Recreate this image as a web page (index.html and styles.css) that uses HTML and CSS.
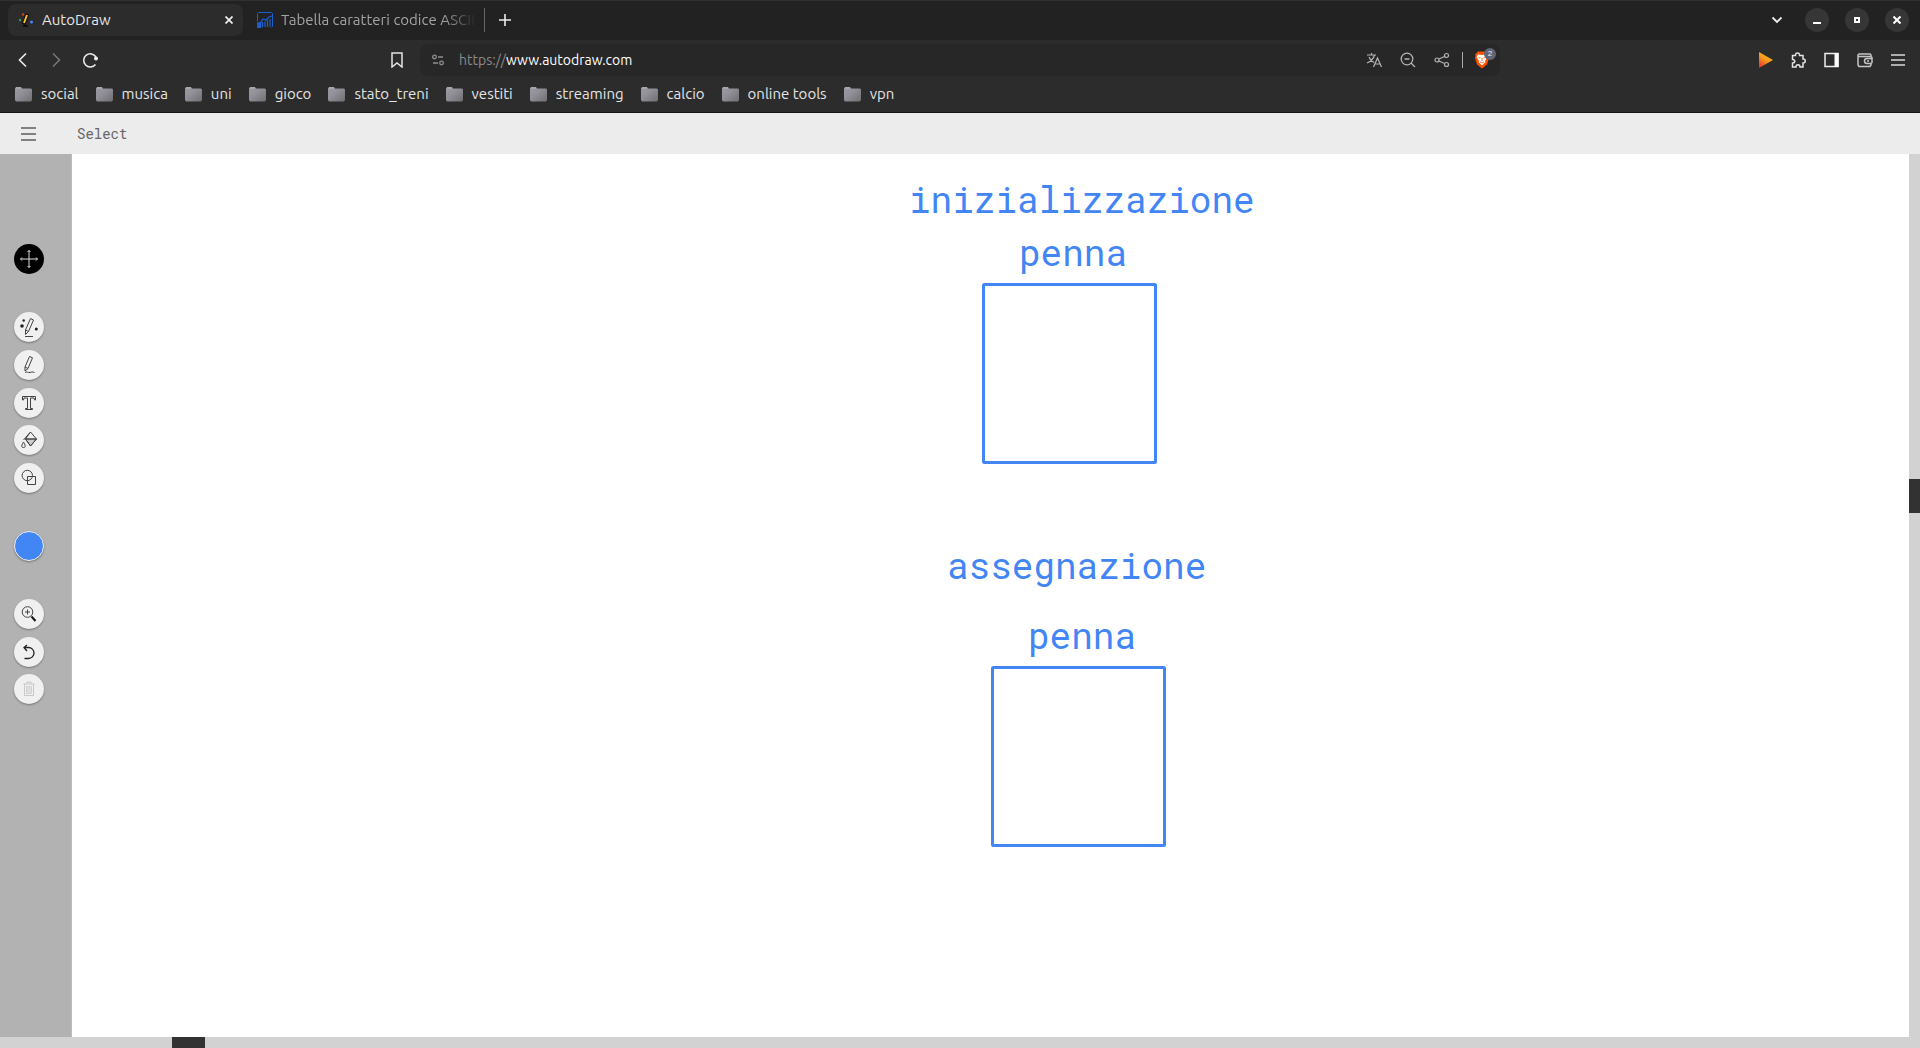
FILE: index.html
```html
<!DOCTYPE html>
<html lang="it">
<head>
<meta charset="utf-8">
<title>AutoDraw</title>
<link rel="stylesheet" href="styles.css">
</head>
<body>
<header class="browser">
  <div class="tabstrip">
    <div class="tab tab-active">
      <svg class="favicon" viewBox="0 0 16 16"><path d="M5 14h5" stroke="#111" stroke-width="2"/><path d="M5.500 12.500 9.500 2" stroke="#111" stroke-width="4"/><path d="M6 11 9 3" stroke="#fbc02d" stroke-width="2"/><circle cx="5" cy="2.500" r="1.200" fill="#d93c30"/><circle cx="2" cy="8" r="1.200" fill="#2e9e50"/><circle cx="13.500" cy="10" r="1.500" fill="#4285f4"/></svg>
      <a class="tab-title" href="#">AutoDraw</a>
      <button class="icon-btn tab-close" aria-label="Chiudi scheda"><svg width="8" height="8" viewBox="0 0 8 8"><path d="m.5.500 7 7m0-7-7 7" stroke="#eee" stroke-width="1.700"/></svg></button>
    </div>
    <div class="tab tab-idle">
      <svg class="favicon" viewBox="0 0 16 16" fill="none" stroke="#1b5fd0"><path d="M.5 9.500v-8l1-1h13l1 1v13l-1 1"/><path d="M.5 11v4.500h3V11zM2 11v4" stroke-width="1.500"/><path d="m3 11 3-4 3 1 3-3 3-1M5.500 15v-5M8 15V9.500M10.500 15V8M13 15V7" stroke-width="1.200"/></svg>
      <a class="tab-title tab-fade" href="#">Tabella caratteri codice ASCII</a>
    </div>
    <button class="icon-btn new-tab" aria-label="Nuova scheda"><svg width="12" height="12" viewBox="0 0 12 12"><path d="M6 0v12M0 6h12" stroke="#eee" stroke-width="1.600"/></svg></button>
    <div class="window-controls">
      <button class="icon-btn" aria-label="Cerca schede"><svg width="12" height="8" viewBox="0 0 12 8"><path d="m1.500 1.500 4.500 4.500 4.500-4.500" fill="none" stroke="#eee" stroke-width="1.800"/></svg></button>
      <button class="icon-btn win" aria-label="Riduci"><svg width="8" height="8" viewBox="0 0 8 8"><path d="M0 7h8" stroke="#fff" stroke-width="2"/></svg></button>
      <button class="icon-btn win" aria-label="Ingrandisci"><svg width="8" height="8" viewBox="0 0 8 8"><path d="M2 2h4v4H2z" fill="none" stroke="#fff" stroke-width="2"/></svg></button>
      <button class="icon-btn win" aria-label="Chiudi"><svg width="8" height="8" viewBox="0 0 8 8"><path d="m.5.500 7 7m0-7-7 7" stroke="#fff" stroke-width="2"/></svg></button>
    </div>
  </div>

  <div class="toolbar">
    <div class="nav">
      <button class="icon-btn" aria-label="Indietro"><svg width="10" height="16" viewBox="0 0 10 16"><path d="M9 1.500 2.500 8 9 14.500" fill="none" stroke="#eee" stroke-width="1.600"/></svg></button>
      <button class="icon-btn" aria-label="Avanti"><svg width="10" height="16" viewBox="0 0 10 16"><path d="M2 1.500 8.500 8 2 14.500" fill="none" stroke="#777" stroke-width="1.600"/></svg></button>
      <button class="icon-btn" aria-label="Ricarica"><svg width="16" height="16" viewBox="0 0 16 16"><path d="M14 5A6.600 6.600 0 1 0 13.500 12.500" fill="none" stroke="#eee" stroke-width="1.500"/><circle cx="14" cy="6.500" r="2" fill="#eee"/></svg></button>
      <button class="icon-btn bookmark" aria-label="Aggiungi ai preferiti"><svg width="12" height="16" viewBox="0 0 12 16"><path d="M1 1h10v14l-5-4-5 4z" fill="none" stroke="#e4e4e4" stroke-width="1.500"/></svg></button>
    </div>
    <div class="omnibox">
      <button class="icon-btn site" aria-label="Informazioni sul sito"><svg width="12" height="12" viewBox="0 0 12 12" fill="none" stroke="#909090" stroke-width="1.300"><circle cx="2.500" cy="3" r="1.800"/><path d="M6 3h5M1 9h5"/><circle cx="9.500" cy="9" r="1.800"/></svg></button>
      <label class="scheme" for="url">https://</label><input class="url" id="url" type="text" value="www.autodraw.com">
      <div class="page-actions">
        <button class="icon-btn" aria-label="Traduci"><svg width="16" height="16" viewBox="0 0 16 16" fill="none" stroke="#b4b4b4" stroke-width="1.200"><path d="M1 3h9M5.500 1v2M8.500 3C7.500 7 4.500 9.500 1 11M3 5c1 3 3 4.500 5 5.500M7.500 15 11.500 6l4 9M9 12h5"/></svg></button>
        <button class="icon-btn" aria-label="Zoom"><svg width="16" height="16" viewBox="0 0 16 16" fill="none" stroke="#b4b4b4" stroke-width="1.300"><circle cx="7" cy="7" r="5.800"/><path d="M4.500 7h5M11 11l4 4"/></svg></button>
        <button class="icon-btn" aria-label="Condividi"><svg width="16" height="16" viewBox="0 0 16 16" fill="none" stroke="#b4b4b4" stroke-width="1.200"><circle cx="3" cy="8" r="2"/><circle cx="12.500" cy="3.500" r="2"/><circle cx="12.500" cy="12.500" r="2"/><path d="m5 7 5.500-2.500M5 9l5.500 2.500"/></svg></button>
      </div>
      <button class="icon-btn shield" aria-label="Brave Shields"><svg width="16" height="18" viewBox="0 0 16 18"><path d="M4 .5h8l3 3-.5 1.500.5 2-2 6.500-5 4-5-4L1 7l.5-2L1 3.500z" fill="#ff5000"/><path d="M4 3.500 8 4l4-.5 1.500 2.500-2.500 4 .500 1L8 14.500 4.500 11l.500-1-2.500-4z" fill="#fff"/><path d="m4.500 6.500 2 .5m5-.5-2 .5M8 7v3M6 11l2 1 2-1" fill="none" stroke="#ff5000" stroke-width=".8"/></svg><span class="badge">2</span></button>
    </div>
    <div class="extensions">
      <button class="icon-btn" aria-label="Estensione"><svg width="14" height="16" viewBox="0 0 14 16"><defs><linearGradient id="play" x1="0" y1="1" x2=".6" y2="0"><stop offset="0" stop-color="#e5252b"/><stop offset=".6" stop-color="#f79c1c"/><stop offset="1" stop-color="#f5b916"/></linearGradient></defs><path d="M0 0v16l14-8z" fill="url(#play)"/></svg></button>
      <button class="icon-btn" aria-label="Estensioni"><svg width="16" height="16" viewBox="0 0 16 16"><path d="M1.500 3.500h3c-.5-3.500 4.500-3.500 4 0h3.500v3.500c3 0 3 4 0 4v4H9c0-3-4-3-4 0H1.500v-4c3 0 3-3.500 0-3.500z" fill="none" stroke="#e4e4e4" stroke-width="1.500"/></svg></button>
      <button class="icon-btn" aria-label="Barra laterale"><svg width="16" height="16" viewBox="0 0 16 16"><path d="M1 1.500h13v13H1z" fill="none" stroke="#eee" stroke-width="1.500"/><path d="M10.500 1h4v14h-4z" fill="#fff"/></svg></button>
      <button class="icon-btn" aria-label="Portafoglio"><svg width="16" height="16" viewBox="0 0 16 16" fill="none" stroke="#c4c4c4" stroke-width="1.500"><path d="M14 4.500V3l-1-1H2L1 3v10l1 1.500h11l1-1.500v-1.500M1 4.500h13l1 1v5l-1 1h-4a2.500 2.500 0 0 1 0-5h5M10 9h2"/></svg></button>
      <button class="icon-btn" aria-label="Menu"><svg width="14" height="12" viewBox="0 0 14 12"><path d="M0 1h14M0 6h14M0 11h14" stroke="#d8d8d8" stroke-width="1.500"/></svg></button>
    </div>
  </div>

  <svg width="0" height="0" class="defs"><defs><linearGradient id="fold" x1="0" y1="0" x2="1" y2="1"><stop offset="0" stop-color="#9c9ba3"/><stop offset=".4" stop-color="#92919a"/><stop offset="1" stop-color="#6f6f70"/></linearGradient><symbol id="folder" viewBox="0 0 17 15"><path d="M0 1.500 1 0h5l1 1.500h9l1 1V13l-1 1.500H1L0 13z" fill="url(#fold)"/><path d="M1 1h5" stroke="#b5b5b5"/></symbol></defs></svg>
  <nav class="bookmarks">
    <a href="#"><svg><use href="#folder"/></svg>social</a>
    <a href="#"><svg><use href="#folder"/></svg>musica</a>
    <a href="#"><svg><use href="#folder"/></svg>uni</a>
    <a href="#"><svg><use href="#folder"/></svg>gioco</a>
    <a href="#"><svg><use href="#folder"/></svg>stato_treni</a>
    <a href="#"><svg><use href="#folder"/></svg>vestiti</a>
    <a href="#"><svg><use href="#folder"/></svg>streaming</a>
    <a href="#"><svg><use href="#folder"/></svg>calcio</a>
    <a href="#"><svg><use href="#folder"/></svg>online tools</a>
    <a href="#"><svg><use href="#folder"/></svg>vpn</a>
  </nav>
</header>

<div class="app-bar">
  <button class="icon-btn app-menu" aria-label="Menu AutoDraw"><svg width="15" height="14" viewBox="0 0 15 14"><path d="M0 1h15M0 7h15M0 13h15" stroke="#808080" stroke-width="2"/></svg></button>
  <span class="tool-name">Select</span>
</div>

<main class="workspace">
  <aside class="tools">
    <div class="group">
      <button class="tool tool-active" aria-label="Select"><svg viewBox="0 0 30 30"><path d="M15 6.500v17M6.500 15h17M13.500 8 15 6.500 16.500 8M13.500 22l1.500 1.500 1.500-1.500M8 13.500 6.500 15 8 16.500M22 13.500l1.500 1.500-1.500 1.500"/></svg></button>
    </div>
    <div class="group group-draw">
      <button class="tool" aria-label="AutoDraw"><svg viewBox="0 0 30 30"><path d="m11.500 18 5-11.500 3 1.500L14.500 19.500l-3 3zM11.500 18l3 1.500M11 24.500h8"/><g fill="#222" stroke="none"><circle cx="9.700" cy="8.500" r="1.200"/><circle cx="8" cy="14" r="1.800"/><circle cx="22.300" cy="17" r="1.500"/></g></svg></button>
      <button class="tool" aria-label="Draw"><svg viewBox="0 0 30 30"><path d="m11 17 4.500-10.500 3 1.300L14 18.500 11 21zM11 17l3 1.500M11 22.500c2-1.500 3 .5 5 0s2-1 4.500 0"/></svg></button>
      <button class="tool" aria-label="Type"><svg viewBox="0 0 30 30"><path d="M8.500 8.500h13V12h-1l-.5-2H16.500v10.500H18.500v1h-7v-1h2V10H10l-.5 2h-1z"/></svg></button>
      <button class="tool" aria-label="Fill"><svg viewBox="0 0 30 30"><path d="M11.500 14h11L16.500 21z" fill="#ccc"/><path d="M16.500 7 22.500 14l-6 7-5-7zM11.500 14h11M16 7.500 9.500 15M9.500 17c-3 5-1.500 5.500 0 5.500s3-.5 0-5.500z"/></svg></button>
      <button class="tool" aria-label="Shape"><svg viewBox="0 0 30 30"><circle cx="13.300" cy="12.500" r="5.200"/><path d="M13.500 13.500h8v8h-8z"/></svg></button>
    </div>
    <div class="group">
      <button class="tool tool-color" aria-label="Color"></button>
    </div>
    <div class="group group-edit">
      <button class="tool" aria-label="Zoom"><svg viewBox="0 0 30 30"><circle cx="13.500" cy="13" r="5.300"/><path d="M13.500 10.500v5M11 13h5"/><path d="m17.500 17.500 4 4.500" stroke="#111" stroke-width="2"/></svg></button>
      <button class="tool" aria-label="Undo"><svg viewBox="0 0 30 30"><path d="M13 8 10 10.500l3 3.500M10 10.500h4.500a5.500 5.500 0 0 1 0 11H10.500" stroke="#222" stroke-width="1.300"/></svg></button>
      <button class="tool" aria-label="Delete" disabled><svg viewBox="0 0 30 30"><path d="M9.500 10h11M13 10V8h4v2M10.500 10v11.500h9V10" stroke="#c8c8c8"/><path d="M12.500 12.500h5v7h-5z" fill="#ddd" stroke="#d2d2d2"/></svg></button>
    </div>
  </aside>
  <section class="canvas">
    <svg class="drawing">
      <text x="837" y="59">inizializzazione</text>
      <text x="947" y="112">penna</text>
      <rect x="911.500" y="130.500" width="172" height="178" rx="1"/>
      <text x="875" y="425">assegnazione</text>
      <text x="956" y="495">penna</text>
      <rect x="920.500" y="513.500" width="172" height="178" rx="1"/>
    </svg>
  </section>
  <div class="scroll-y"><div class="thumb-y"></div></div>
</main>
<div class="scroll-x"><div class="thumb-x"></div></div>
</body>
</html>
```
FILE: styles.css
```css
* { box-sizing: border-box; }

body {
  margin: 0;
  height: 100vh;
  display: flex;
  flex-direction: column;
  overflow: hidden;
  background: #fff;
  font-family: Ubuntu, "Noto Sans", sans-serif;
  font-size: 15px;
  line-height: 20px;
}

svg { display: block; }
a { color: inherit; text-decoration: none; }

.icon-btn {
  display: flex;
  align-items: center;
  justify-content: center;
  width: 16px;
  height: 24px;
  padding: 0;
  border: 0;
  background: none;
}
.icon-btn svg { flex: none; }

.browser {
  flex: none;
  background: #2c2c2c;
  color: #e6e6e6;
  border-bottom: 1px solid #161616;
}
.defs { position: absolute; }

/* Tabs */
.tabstrip {
  display: flex;
  align-items: center;
  height: 40px;
  padding: 0 11px 1px 8px;
  background: #222;
  border-top: 1px solid #303030;
}
.tab {
  display: flex;
  align-items: center;
  gap: 8px;
  height: 32px;
  padding: 0 10px;
  border-radius: 8px;
}
.tab-active { width: 235px; background: #2c2c2c; }
.tab-idle {
  width: 242px;
  height: 24px;
  padding: 0 8px 0 14px;
  border-right: 1px solid #666;
  border-radius: 0;
  color: #a4a4a4;
}
.favicon { flex: none; width: 16px; height: 16px; }
.tab-title { flex: 1; overflow: hidden; white-space: nowrap; }
.tab-fade {
  -webkit-mask-image: linear-gradient(to left, transparent, #000 32px);
  mask-image: linear-gradient(to left, transparent, #000 32px);
}
.tab-close { width: 8px; }
.new-tab { margin-left: 12px; }
.window-controls { display: flex; gap: 16px; margin-left: auto; }
.window-controls .icon-btn { width: 24px; }
.window-controls .win { border-radius: 50%; background: #363636; }

/* Address row */
.toolbar {
  display: flex;
  align-items: center;
  height: 40px;
  padding: 0 14px;
}
.nav { display: flex; gap: 18px; flex: 1; }
.bookmark { margin-left: auto; margin-right: 15px; }
.omnibox {
  display: flex;
  align-items: center;
  flex: 0 0 1080px;
  height: 32px;
  padding: 0 10px;
  border-radius: 8px;
  background: #272727;
  font-size: 14px;
}
.site { margin-right: 13px; }
.scheme { color: #8a8a8a; }
.url {
  flex: 1;
  min-width: 0;
  padding: 0;
  border: 0;
  outline: 0;
  background: none;
  color: #fff;
  font: inherit;
}
.page-actions {
  display: flex;
  gap: 18px;
  padding-right: 12px;
  border-right: 1px solid #aaa;
  height: 16px;
  align-items: center;
}
.shield { position: relative; margin-left: 11px; }
.badge {
  position: absolute;
  left: 10px;
  top: 0;
  width: 12px;
  height: 12px;
  border-radius: 6px;
  background: #626575;
  color: #eee;
  font-size: 8px;
  line-height: 12px;
}
.extensions { display: flex; justify-content: flex-end; gap: 17px; flex: 1; }

/* Bookmarks */
.bookmarks {
  display: flex;
  align-items: center;
  gap: 17px;
  height: 32px;
  padding: 0 15px 4px;
}
.bookmarks a { display: flex; align-items: center; gap: 9px; white-space: nowrap; }
.bookmarks svg { width: 17px; height: 15px; }

/* AutoDraw */
.app-bar {
  flex: none;
  display: flex;
  align-items: center;
  height: 41px;
  background: #ececec;
}
.app-menu { width: 57px; }
.tool-name {
  padding-left: 20px;
  color: #666;
  font-family: "Roboto Mono", "Liberation Mono", monospace;
  font-size: 14px;
}
.workspace { display: flex; flex: 1; min-height: 0; }
.tools {
  display: flex;
  flex-direction: column;
  gap: 38px;
  width: 72px;
  padding: 90px 0 0 14px;
  background: #b2b2b2;
  border-right: 1px solid #bcbcbc;
}
.group { display: flex; flex-direction: column; justify-content: space-between; }
.group-draw { height: 181px; }
.group-edit { height: 105px; }
.tool {
  width: 30px;
  height: 30px;
  padding: 0;
  border: 0;
  border-radius: 50%;
  background: #f0f0f0;
  box-shadow: 0 1px 2px rgba(0, 0, 0, .35);
}
.tool svg { width: 30px; height: 30px; fill: none; stroke: #444; }
.tool-active { background: #000; box-shadow: none; }
.tool-active svg { stroke: #ddd; }
.tool-color { background: #4285f4; border: 1px solid #f0f0f0; }

.canvas { flex: 1; min-width: 0; }
.drawing { width: 100%; height: 100%; }
.drawing text {
  fill: #4285f4;
  font-family: "Roboto Mono", "Liberation Mono", monospace;
  font-size: 36px;
}
.drawing rect { fill: none; stroke: #4285f4; stroke-width: 3px; }

.scroll-y { width: 11px; padding-top: 325px; background: #d2d2d2; }
.thumb-y { height: 34px; background: #323232; }
.scroll-x { flex: none; height: 11px; padding-left: 172px; background: #d2d2d2; }
.thumb-x { width: 33px; height: 11px; background: #323232; }
```
